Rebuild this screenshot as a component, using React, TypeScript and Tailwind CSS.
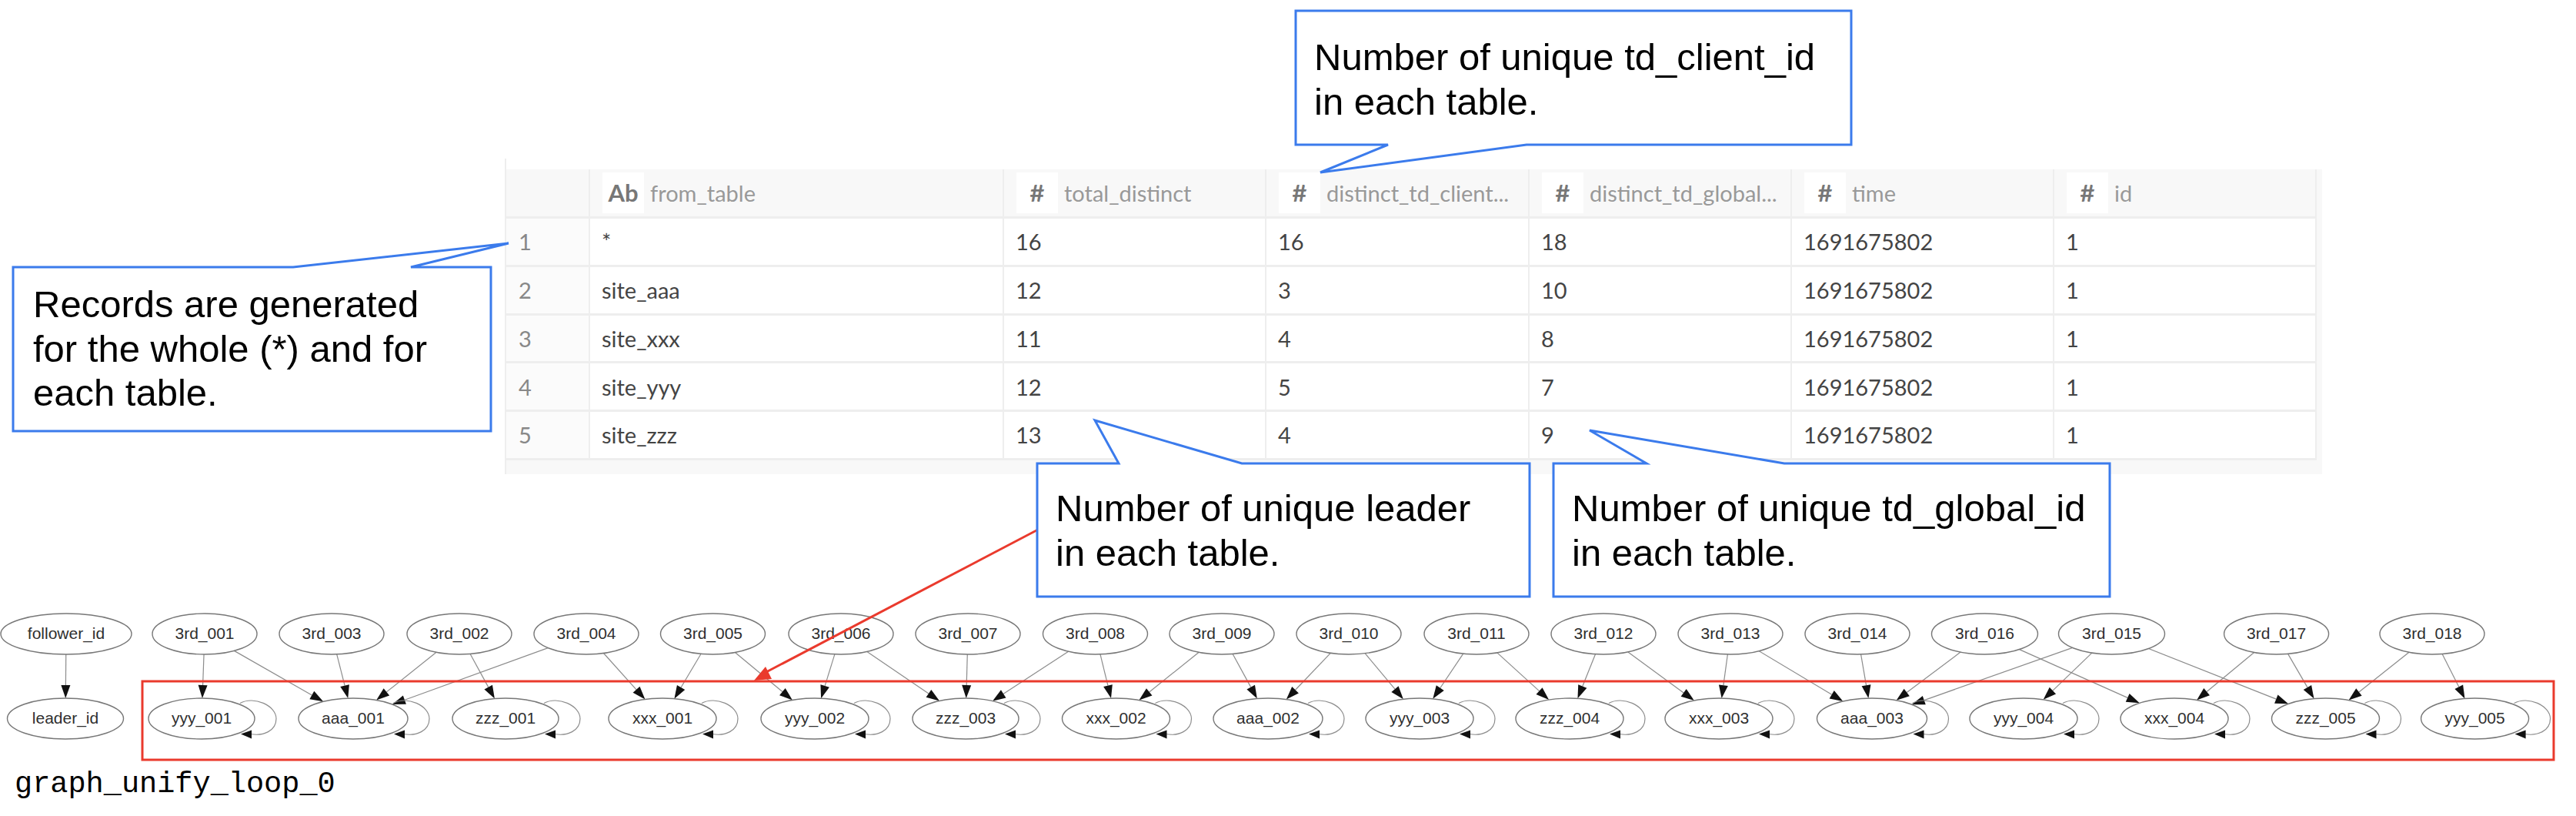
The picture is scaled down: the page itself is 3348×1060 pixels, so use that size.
import type { ReactNode } from "react";

// from_table rows
const rows = [
  ["*", "16", "16", "18", "1691675802", "1"],
  ["site_aaa", "12", "3", "10", "1691675802", "1"],
  ["site_xxx", "11", "4", "8", "1691675802", "1"],
  ["site_yyy", "12", "5", "7", "1691675802", "1"],
  ["site_zzz", "13", "4", "9", "1691675802", "1"],
];

const headers = [
  { icon: "Ab", label: "from_table" },
  { icon: "#", label: "total_distinct" },
  { icon: "#", label: "distinct_td_client..." },
  { icon: "#", label: "distinct_td_global..." },
  { icon: "#", label: "time" },
  { icon: "#", label: "id" },
];

type GraphNode = { x: number; rx: number };

const TOP_Y = 823.5;
const BOTTOM_Y = 933.5;
const RY = 26.5;

const followers: Record<string, GraphNode> = {
  follower_id: { x: 86, rx: 85 },
  "3rd_001": { x: 266, rx: 68 },
  "3rd_003": { x: 431, rx: 68 },
  "3rd_002": { x: 597, rx: 68 },
  "3rd_004": { x: 762, rx: 68 },
  "3rd_005": { x: 926.5, rx: 68 },
  "3rd_006": { x: 1093, rx: 68 },
  "3rd_007": { x: 1258, rx: 68 },
  "3rd_008": { x: 1423.5, rx: 68 },
  "3rd_009": { x: 1588, rx: 68 },
  "3rd_010": { x: 1753, rx: 68 },
  "3rd_011": { x: 1919, rx: 68 },
  "3rd_012": { x: 2084, rx: 68 },
  "3rd_013": { x: 2249, rx: 68 },
  "3rd_014": { x: 2414, rx: 68 },
  "3rd_016": { x: 2579.5, rx: 69 },
  "3rd_015": { x: 2744.5, rx: 69 },
  "3rd_017": { x: 2958.6, rx: 68 },
  "3rd_018": { x: 3161, rx: 68 },
};

const leaders: Record<string, GraphNode> = {
  leader_id: { x: 85, rx: 75.5 },
  yyy_001: { x: 262, rx: 69 },
  aaa_001: { x: 459, rx: 71 },
  zzz_001: { x: 657, rx: 69 },
  xxx_001: { x: 861, rx: 70 },
  yyy_002: { x: 1059, rx: 70 },
  zzz_003: { x: 1255, rx: 69 },
  xxx_002: { x: 1450.5, rx: 70 },
  aaa_002: { x: 1648, rx: 71 },
  yyy_003: { x: 1845, rx: 70 },
  zzz_004: { x: 2040, rx: 70 },
  xxx_003: { x: 2234, rx: 70 },
  aaa_003: { x: 2433, rx: 71.5 },
  yyy_004: { x: 2630, rx: 70 },
  xxx_004: { x: 2826, rx: 70 },
  zzz_005: { x: 3022.5, rx: 70 },
  yyy_005: { x: 3216.6, rx: 70 },
};

const edges: [string, string][] = [
  ["follower_id", "leader_id"],
  ["3rd_001", "yyy_001"],
  ["3rd_001", "aaa_001"],
  ["3rd_003", "aaa_001"],
  ["3rd_002", "aaa_001"],
  ["3rd_002", "zzz_001"],
  ["3rd_004", "aaa_001"],
  ["3rd_004", "xxx_001"],
  ["3rd_005", "xxx_001"],
  ["3rd_005", "yyy_002"],
  ["3rd_006", "yyy_002"],
  ["3rd_006", "zzz_003"],
  ["3rd_007", "zzz_003"],
  ["3rd_008", "zzz_003"],
  ["3rd_008", "xxx_002"],
  ["3rd_009", "xxx_002"],
  ["3rd_009", "aaa_002"],
  ["3rd_010", "aaa_002"],
  ["3rd_010", "yyy_003"],
  ["3rd_011", "yyy_003"],
  ["3rd_011", "zzz_004"],
  ["3rd_012", "zzz_004"],
  ["3rd_012", "xxx_003"],
  ["3rd_013", "xxx_003"],
  ["3rd_013", "aaa_003"],
  ["3rd_014", "aaa_003"],
  ["3rd_016", "aaa_003"],
  ["3rd_015", "aaa_003"],
  ["3rd_016", "xxx_004"],
  ["3rd_015", "yyy_004"],
  ["3rd_015", "zzz_005"],
  ["3rd_017", "xxx_004"],
  ["3rd_017", "zzz_005"],
  ["3rd_018", "zzz_005"],
  ["3rd_018", "yyy_005"],
];

function Edge({ from, to }: { from: GraphNode; to: GraphNode }) {
  const dx = to.x - from.x;
  const dy = BOTTOM_Y - TOP_Y;
  const t0 = 1 / Math.hypot(dx / from.rx, dy / RY);
  const t1 = 1 / Math.hypot(dx / to.rx, dy / RY);
  const sx = from.x + dx * t0;
  const sy = TOP_Y + dy * t0;
  const ex = to.x - dx * t1;
  const ey = BOTTOM_Y - dy * t1;
  const len = Math.hypot(ex - sx, ey - sy);
  const ux = (ex - sx) / len;
  const uy = (ey - sy) / len;
  const bx = ex - ux * 17;
  const by = ey - uy * 17;
  const points = `${ex},${ey} ${bx - uy * 6},${by + ux * 6} ${bx + uy * 6},${by - ux * 6}`;
  return (
    <g>
      <line x1={sx} y1={sy} x2={bx} y2={by} stroke="#8c8c8c" strokeWidth="1.2" />
      <polygon points={points} fill="#111" />
    </g>
  );
}

function Ellipse({ name, node, y }: { name: string; node: GraphNode; y: number }) {
  return (
    <g>
      <ellipse cx={node.x} cy={y} rx={node.rx} ry={RY} fill="none" stroke="#777777" strokeWidth="1.4" />
      <text
        x={node.x}
        y={y + 6.5}
        textAnchor="middle"
        fontSize="21"
        fill="#2f2f2f"
        fontFamily='"Liberation Sans", Arial, sans-serif'
      >
        {name}
      </text>
    </g>
  );
}

function SelfLoop({ node }: { node: GraphNode }) {
  const o = node.x + node.rx - 69;
  const y = BOTTOM_Y;
  return (
    <g>
      <path
        d={`M${o + 50},${y - 20} C${o + 68},${y - 30} ${o + 97},${y - 17} ${o + 97},${y} C${o + 97},${y + 16} ${o + 80},${y + 23} ${o + 64},${y + 20}`}
        fill="none"
        stroke="#8c8c8c"
        strokeWidth="1.2"
      />
      <polygon points={`${o + 51},${y + 20} ${o + 65},${y + 15} ${o + 65},${y + 26}`} fill="#111" />
    </g>
  );
}

function Callout({
  left,
  top,
  width,
  height,
  tail,
  className,
  children,
}: {
  left: number;
  top: number;
  width: number;
  height: number;
  tail: string;
  className: string;
  children: ReactNode;
}) {
  return (
    <div
      className={`absolute z-10 text-[49px] leading-[57.7px] text-black font-['Liberation_Sans',Arial,sans-serif] ${className}`}
      style={{ left, top, width, height }}
    >
      <svg className="absolute left-0 top-0 overflow-visible" width={width} height={height}>
        <path d={tail} fill="#fff" stroke="#3b7bec" strokeWidth="3" strokeLinejoin="miter" />
      </svg>
      <div className="relative whitespace-pre">{children}</div>
    </div>
  );
}

export default function App() {
  return (
    <div className="relative w-[3348px] h-[1060px] overflow-hidden bg-white flex flex-col pt-[206px]">
      {/* Result table */}
      <div className="ml-[656px] w-[2362px] h-[410px] pt-[14px] border-l-2 border-[#eeeeee]">
        <div className="h-full bg-[#f8f8f8] pr-[9px] font-['Lato',sans-serif] lining-nums">
          <div className="grid grid-cols-[109px_538px_341px_342px_341px_341px_341px]">
            <div className="h-[64px] border-r-2 border-b-[3px] border-[#eeeeee]" />
            {headers.map((h) => (
              <div
                key={h.label}
                className="h-[64px] border-r-2 border-b-[3px] border-[#eeeeee] pl-[16px] flex items-center gap-[8px]"
              >
                <span className="w-[54px] h-[53px] bg-white flex items-center justify-center text-[31px] font-bold text-[#777777]">
                  {h.icon}
                </span>
                <span className="text-[29px] text-[#999999] whitespace-nowrap">{h.label}</span>
              </div>
            ))}
            {rows.map((row, i) => (
              <div key={i} className="contents">
                <div className="h-[62.8px] bg-[#fbfbfb] border-r-2 border-b-[3px] border-[#eeeeee] pl-[16px] flex items-center text-[29px] text-[#888888]">
                  {i + 1}
                </div>
                {row.map((cell, j) => (
                  <div
                    key={j}
                    className="h-[62.8px] bg-white border-r-2 border-b-[3px] border-[#eeeeee] pl-[15px] flex items-center text-[29px] text-[#444444]"
                  >
                    {cell}
                  </div>
                ))}
              </div>
            ))}
          </div>
        </div>
      </div>

      {/* Graph */}
      <svg className="block mt-[164px] overflow-visible" width="3348" height="210" viewBox="0 780 3348 210">
        {edges.map(([a, b]) => (
          <Edge key={a + b} from={followers[a]} to={leaders[b]} />
        ))}
        {Object.entries(followers).map(([name, node]) => (
          <Ellipse key={name} name={name} node={node} y={TOP_Y} />
        ))}
        {Object.entries(leaders).map(([name, node]) => (
          <Ellipse key={name} name={name} node={node} y={BOTTOM_Y} />
        ))}
        {Object.entries(leaders)
          .filter(([name]) => name !== "leader_id")
          .map(([name, node]) => (
            <SelfLoop key={name} node={node} />
          ))}
        <rect x="185" y="885" width="3134" height="102" fill="none" stroke="#ea3a2d" strokeWidth="3" />
        <line x1="1349" y1="688" x2="994" y2="874" stroke="#ea3a2d" strokeWidth="3" />
        <polygon points="980,884 995,866 1003,882" fill="#ea3a2d" />
      </svg>

      <div className="pl-[19px] mt-[7px] text-[38.6px] leading-[44px] text-black font-['Liberation_Mono',monospace]">
        graph_unify_loop_0
      </div>

      {/* Callouts */}
      <Callout
        left={17}
        top={347}
        width={621}
        height={213}
        className="pt-[20px] pl-[26px]"
        tail="M0,0 H364 L644,-31 L517,0 H621 V213 H0 Z"
      >
        {"Records are generated\nfor the whole (*) and for\neach table."}
      </Callout>
      <Callout
        left={1684}
        top={14}
        width={722}
        height={174}
        className="pt-[32px] pl-[24px]"
        tail="M0,0 H722 V174 H300 L32,210 L120,174 H0 Z"
      >
        {"Number of unique td_client_id\nin each table."}
      </Callout>
      <Callout
        left={1348}
        top={602}
        width={640}
        height={173}
        className="pt-[30px] pl-[24px]"
        tail="M0,0 H106 L75,-56 L266,0 H640 V173 H0 Z"
      >
        {"Number of unique leader\nin each table."}
      </Callout>
      <Callout
        left={2019}
        top={602}
        width={723}
        height={173}
        className="pt-[30px] pl-[24px]"
        tail="M0,0 H121 L47,-43 L300,0 H723 V173 H0 Z"
      >
        {"Number of unique td_global_id\nin each table."}
      </Callout>
    </div>
  );
}
